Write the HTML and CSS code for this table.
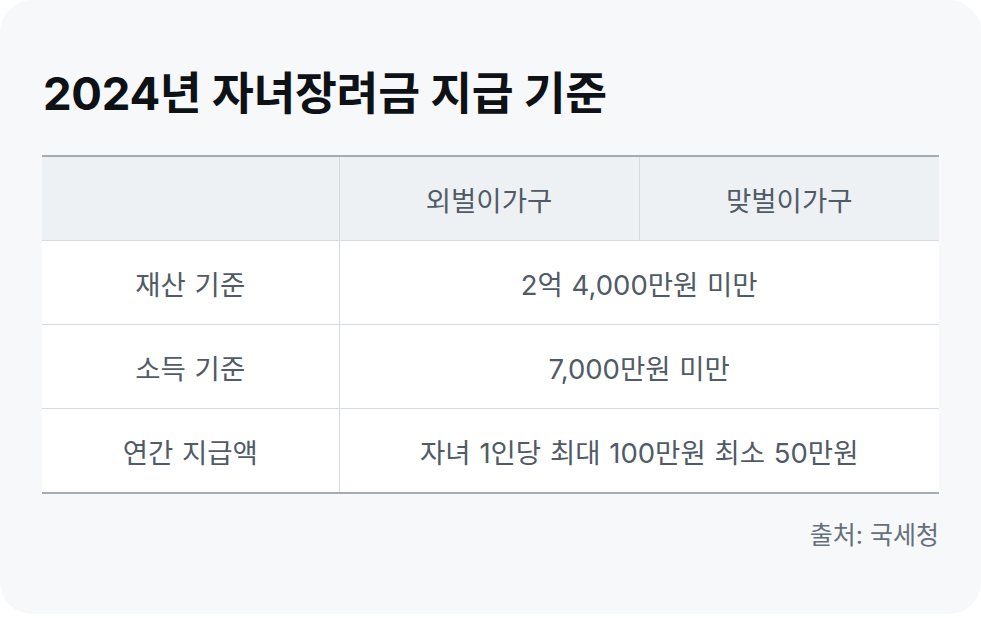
FILE: index.html
```html
<!DOCTYPE html>
<html lang="ko">
<head>
<meta charset="utf-8">
<title>2024년 자녀장려금 지급 기준</title>
<link rel="stylesheet" href="styles.css">
</head>
<body>
<div class="card">
  <h1 class="title">2024년 자녀장려금 지급 기준</h1>
  <table class="grid">
    <colgroup>
      <col class="c1"><col class="c2"><col class="c3">
    </colgroup>
    <thead>
      <tr>
        <th></th>
        <th>외벌이가구</th>
        <th>맞벌이가구</th>
      </tr>
    </thead>
    <tbody>
      <tr>
        <td>재산 기준</td>
        <td colspan="2">2억 4,000만원 미만</td>
      </tr>
      <tr>
        <td>소득 기준</td>
        <td colspan="2">7,000만원 미만</td>
      </tr>
      <tr>
        <td>연간 지급액</td>
        <td colspan="2">자녀 1인당 최대 100만원 최소 50만원</td>
      </tr>
    </tbody>
  </table>
  <p class="source">출처: 국세청</p>
</div>
</body>
</html>
```
FILE: styles.css
```css
html, body {
  margin: 0;
  padding: 0;
  background: #ffffff;
}
body {
  font-family: Inter, "Noto Sans CJK KR", sans-serif;
}
.card {
  width: 981px;
  height: 614px;
  box-sizing: border-box;
  background: #f7f8fa;
  border-radius: 32px;
  padding: 66px 42px 0 42px;
}
.title {
  margin: 0 0 0 1px;
  font-size: 45.5px;
  line-height: 56px;
  font-weight: 700;
  color: #0e1116;
  letter-spacing: -0.3px;
}
.grid {
  margin-top: 33px;
  width: 897px;
  border-collapse: collapse;
  table-layout: fixed;
  border-top: 2px solid #a4acb6;
  border-bottom: 2px solid #a4acb6;
}
.c1 { width: 297px; }
.c2 { width: 300px; }
.c3 { width: 300px; }
.grid th,
.grid td {
  height: 83px;
  padding: 0;
  text-align: center;
  vertical-align: middle;
  font-size: 27.5px;
  font-weight: 400;
  color: #515b67;
  word-spacing: 1px;
  border: 1px solid #d6dbe1;
}
.grid th:first-child,
.grid td:first-child { border-left: none; }
.grid th:last-child,
.grid td:last-child { border-right: none; }
.grid thead th {
  background: #eef1f4;
  border-top: none;
}
.grid tbody td {
  background: #ffffff;
}
.grid tbody tr:last-child td { border-bottom: none; }
.source {
  margin: 26px 0 0 0;
  text-align: right;
  font-size: 25px;
  line-height: 30px;
  font-weight: 400;
  color: #66707b;
}
```
